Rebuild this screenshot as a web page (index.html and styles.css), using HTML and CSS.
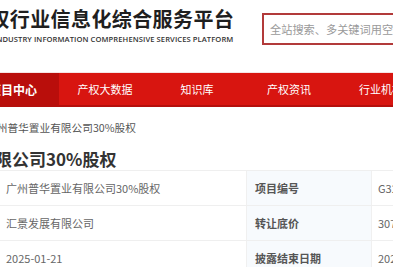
FILE: index.html
```html
<!DOCTYPE html>
<html lang="zh-CN">
<head>
<meta charset="utf-8">
<title>产权行业信息化综合服务平台</title>
<link rel="stylesheet" href="styles.css">
</head>
<body>
<div class="page">
  <header class="header">
    <div class="logo">
      <div class="logo-title">产权行业信息化综合服务平台</div>
      <div class="logo-sub">Industry Information Comprehensive Services Platform</div>
    </div>
    <div class="search">
      <span class="search-placeholder">全站搜索、多关键词用空格隔开</span>
    </div>
  </header>
  <nav class="nav">
    <a class="nav-item">首页</a>
    <a class="nav-item active">项目中心</a>
    <a class="nav-item">产权大数据</a>
    <a class="nav-item">知识库</a>
    <a class="nav-item">产权资讯</a>
    <a class="nav-item">行业机构</a>
  </nav>
  <main class="main">
    <div class="crumb">当前位置：首页 &gt; 项目中心 &gt; 广州普华置业有限公司30%股权</div>
    <h1 class="title">广州普华置业有限公司30%股权</h1>
    <div class="info">
      <div class="row">
        <div class="label">项目名称</div>
        <div class="value">广州普华置业有限公司30%股权</div>
        <div class="label alt">项目编号</div>
        <div class="value last">G32025GD1000012</div>
      </div>
      <div class="row">
        <div class="label">转让方</div>
        <div class="value">汇景发展有限公司</div>
        <div class="label alt">转让底价</div>
        <div class="value last">30750.00万元</div>
      </div>
      <div class="row">
        <div class="label">信息发布日期</div>
        <div class="value">2025-01-21</div>
        <div class="label alt">披露结束日期</div>
        <div class="value last">2025-02-18</div>
      </div>
    </div>
  </main>
</div>
</body>
</html>
```

FILE: styles.css
```css
* { box-sizing: border-box; }
html, body {
  margin: 0;
  padding: 0;
  background: #fff;
  overflow: hidden;
}
body {
  font-family: "Noto Sans CJK SC", "Noto Sans", sans-serif;
  color: #333;
}
.page {
  width: 1200px;
  margin-left: -124px;
}
.header {
  height: 73px;
  display: flex;
  align-items: flex-start;
  border-bottom: 1px solid #f6e4e4;
}
.logo {
  width: 386px;
  padding-top: 7px;
  display: flex;
  flex-direction: column;
  align-items: flex-end;
}
.logo-title {
  font-size: 20px;
  line-height: 24px;
  font-weight: 700;
  color: #1f1f1f;
  letter-spacing: 0.4px;
  width: 272px;
  white-space: nowrap;
  text-indent: -21px;
}
.logo-sub {
  width: 272px;
  font-family: "Open Sans", "Noto Sans", sans-serif;
  font-size: 7.6px;
  font-weight: 600;
  line-height: 12px;
  color: #333;
  text-transform: uppercase;
  letter-spacing: 0.08px;
  white-space: nowrap;
  margin-top: 2px;
  text-indent: 4px;
}
.search {
  margin-top: 13px;
  width: 300px;
  height: 32px;
  border: 2px solid #b23a3a;
  display: flex;
  align-items: center;
  padding-left: 6px;
  overflow: hidden;
}
.search-placeholder {
  font-size: 11.2px;
  color: #9a9a9a;
  white-space: nowrap;
}
.nav {
  display: flex;
  height: 34px;
  background: #d81510;
  border-bottom: 2px solid #b50f0c;
}
.nav-item {
  width: 92px;
  flex: none;
  display: flex;
  align-items: center;
  justify-content: center;
  color: #fff;
  font-size: 11px;
  text-decoration: none;
}
.nav-item:first-child { margin-left: -1px; }
.nav-item.active {
  background: #b90e0b;
  font-weight: 700;
  font-size: 12px;
}
.crumb {
  margin-top: 11px;
  margin-left: -29px;
  height: 20px;
  line-height: 20px;
  font-size: 10.7px;
  color: #555;
  white-space: nowrap;
}
.title {
  margin: 10px 0 0;
  height: 22px;
  line-height: 22px;
  font-size: 17px;
  font-weight: 700;
  color: #333;
  white-space: nowrap;
}
.info {
  border-top: 1px solid #efefef;
}
.row {
  display: grid;
  grid-template-columns: 120px 250px 126px 1fr;
  height: 35px;
  border-bottom: 1px solid #efefef;
}
.label, .value {
  display: flex;
  align-items: center;
  font-size: 11px;
  white-space: nowrap;
}
.label {
  padding-left: 8px;
  color: #555;
  font-weight: 700;
  background: #f7fafd;
}
.value {
  padding-left: 10px;
  color: #666;
}
.value.last { padding-left: 6px; }
.label.alt {
  border-left: 1px solid #f0f0f0;
  border-right: 1px solid #f0f0f0;
}
```
